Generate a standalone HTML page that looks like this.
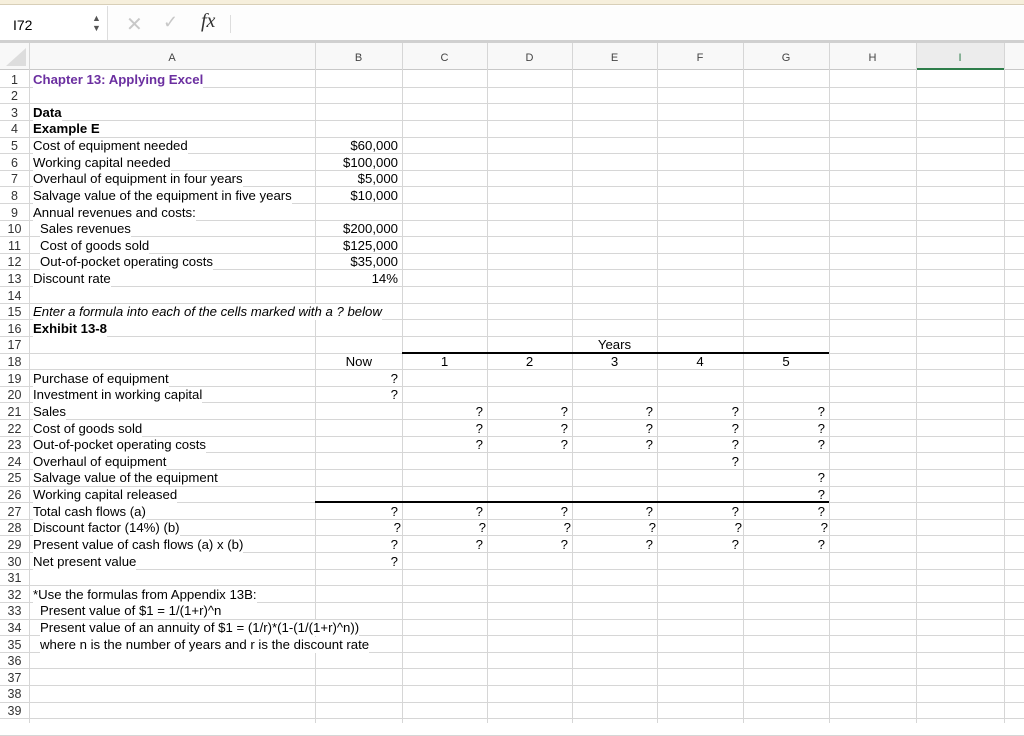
<!DOCTYPE html>
<html><head><meta charset="utf-8"><style>
*{margin:0;padding:0;box-sizing:border-box}
body{width:1024px;height:723px;overflow:hidden;background:#fff;font-family:"Liberation Sans",Arial,sans-serif;position:relative}
.a{position:absolute}
.t{position:absolute;font-size:13.2px;line-height:16px;white-space:nowrap;color:#000}
.r{text-align:right}
.c{text-align:center}
.rn{position:absolute;left:0;width:29px;font-size:12.5px;color:#333;text-align:center;line-height:16px}
.vl{position:absolute;top:43px;width:1px;height:680px;background:#d6d6d6}
.hl{position:absolute;left:0;width:1024px;height:1px;background:#d6d6d6}
.ch{position:absolute;top:52px;font-size:11px;color:#444;text-align:center}
.w{background:#fff}
</style></head><body>
<div class="a" style="left:0;top:0;width:1024px;height:5px;background:#f6efdc;border-bottom:1px solid #d8cfb8"></div>
<div class="a" style="left:0;top:6px;width:1024px;height:35px;background:#fdfdfd"></div>
<div class="a" style="left:0;top:6px;width:108px;height:35px;background:#fff;border-right:1px solid #ddd"></div>
<div class="t" style="left:13px;top:17px;font-size:14px">I72</div>
<div class="a" style="left:92px;top:13px;font-size:9px;color:#555;line-height:10px">▲<br>▼</div>
<div class="a" style="left:126px;top:12px;font-size:20px;color:#c8c8c8">✕</div>
<div class="a" style="left:163px;top:12px;font-size:18px;color:#c8c8c8">✓</div>
<div class="a" style="left:201px;top:10px;font-size:20px;font-style:italic;font-family:'Liberation Serif',serif;color:#333">fx</div>
<div class="a" style="left:230px;top:15px;width:1px;height:18px;background:#ddd"></div>
<div class="a" style="left:0;top:40px;width:1024px;height:3px;background:#d0d0d0"></div>
<div class="a" style="left:0;top:43px;width:1024px;height:27px;background:#f8f8f8;border-bottom:1px solid #c8c8c8"></div>
<div class="a" style="left:916px;top:43px;width:88px;height:27px;background:#ececec;border-bottom:2px solid #2e7d4a"></div>
<div class="a" style="left:6px;top:48px;width:0;height:0;border-left:20px solid transparent;border-bottom:18px solid #ddd"></div>
<div class="vl" style="left:29px"></div><div class="vl" style="left:315px"></div><div class="vl" style="left:402px"></div><div class="vl" style="left:487px"></div><div class="vl" style="left:572px"></div><div class="vl" style="left:657px"></div><div class="vl" style="left:743px"></div><div class="vl" style="left:829px"></div><div class="vl" style="left:916px"></div><div class="vl" style="left:1004px"></div>
<div class="ch" style="left:29px;width:286px">A</div><div class="ch" style="left:315px;width:87px">B</div><div class="ch" style="left:402px;width:85px">C</div><div class="ch" style="left:487px;width:85px">D</div><div class="ch" style="left:572px;width:85px">E</div><div class="ch" style="left:657px;width:86px">F</div><div class="ch" style="left:743px;width:86px">G</div><div class="ch" style="left:829px;width:87px">H</div><div class="ch" style="left:916px;width:88px;color:#2e7d4a">I</div>
<div id="g"></div>
<script>
var H=16.62,T=70,s='';
for(var n=1;n<=40;n++){var y=T+n*H;s+='<div class="hl" style="top:'+y.toFixed(1)+'px"></div>';}
for(var n=1;n<=39;n++){var y=T+(n-1)*H;s+='<div class="rn" style="top:'+(y+1.5).toFixed(1)+'px">'+n+'</div>';}
function t(r,x,txt,st){var y=T+(r-1)*H+1.5;s+='<div class="t w" style="top:'+y.toFixed(1)+'px;left:'+x+'px;'+(st||'')+'">'+txt+'</div>';}
function rr(r,right,txt,st){var y=T+(r-1)*H+1.5;s+='<div class="t r" style="top:'+y.toFixed(1)+'px;left:'+(right-120)+'px;width:120px;'+(st||'')+'">'+txt+'</div>';}
function cc(r,l,w,txt){var y=T+(r-1)*H+1.5;s+='<div class="t c" style="top:'+y.toFixed(1)+'px;left:'+l+'px;width:'+w+'px">'+txt+'</div>';}
t(1,33,'Chapter 13: Applying Excel','font-weight:bold;color:#6b2fa0');
t(3,33,'Data','font-weight:bold');t(4,33,'Example E','font-weight:bold');
t(5,33,'Cost of equipment needed');t(6,33,'Working capital needed');t(7,33,'Overhaul of equipment in four years');t(8,33,'Salvage value of the equipment in five years');t(9,33,'Annual revenues and costs:');
t(10,40,'Sales revenues');t(11,40,'Cost of goods sold');t(12,40,'Out-of-pocket operating costs');t(13,33,'Discount rate');
rr(5,398,'$60,000');rr(6,398,'$100,000');rr(7,398,'$5,000');rr(8,398,'$10,000');rr(10,398,'$200,000');rr(11,398,'$125,000');rr(12,398,'$35,000');rr(13,398,'14%');
t(15,33,'Enter a formula into each of the cells marked with a ? below','font-style:italic');
t(16,33,'Exhibit 13-8','font-weight:bold');
cc(17,572,85,'Years');
rr(18,372,'Now');cc(18,402,85,'1');cc(18,487,85,'2');cc(18,572,85,'3');cc(18,657,86,'4');cc(18,743,86,'5');
var L=['Purchase of equipment','Investment in working capital','Sales','Cost of goods sold','Out-of-pocket operating costs','Overhaul of equipment','Salvage value of the equipment','Working capital released','Total cash flows (a)','Discount factor (14%) (b)','Present value of cash flows (a) x (b)','Net present value'];
for(var i=0;i<L.length;i++)t(19+i,33,L[i]);
var R=[398,483,568,653,739,825];
function q(r,cols,off){for(var k=0;k<cols.length;k++)rr(r,R[cols[k]]-(off||0),'?');}
q(19,[0]);q(20,[0]);q(21,[1,2,3,4,5]);q(22,[1,2,3,4,5]);q(23,[1,2,3,4,5]);q(24,[4]);q(25,[5]);q(26,[5]);
q(27,[0,1,2,3,4,5]);
for(var k=0;k<6;k++)rr(28,R[k]+3,'?');
q(29,[0,1,2,3,4,5]);q(30,[0]);
t(32,33,'*Use the formulas from Appendix 13B:');t(33,40,'Present value of $1 = 1/(1+r)^n');t(34,40,'Present value of an annuity of $1 = (1/r)*(1-(1/(1+r)^n))');t(35,40,'where n is the number of years and r is the discount rate');
s+='<div class="a" style="left:402px;top:'+(T+17*H-1).toFixed(1)+'px;width:427px;height:2px;background:#000"></div>';
s+='<div class="a" style="left:315px;top:'+(T+26*H-1).toFixed(1)+'px;width:514px;height:2px;background:#000"></div>';
document.getElementById('g').innerHTML=s;
</script>
</body></html>
